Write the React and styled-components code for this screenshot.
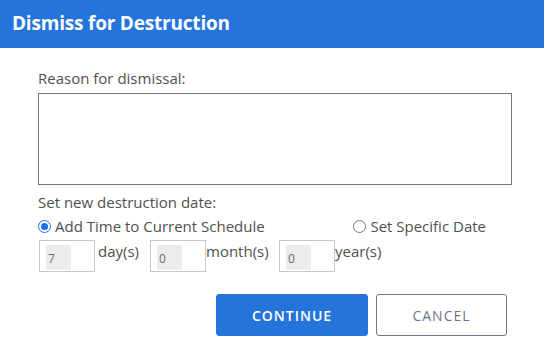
import React from "react";
import styled, { createGlobalStyle } from "styled-components";

const Global = createGlobalStyle`
  html, body { margin: 0; padding: 0; background: #fff; }
  body { font-family: "Open Sans", "Noto Sans", sans-serif; color: #555; }
  * { box-sizing: border-box; }
`;

const Dialog = styled.div`
  width: 544px;
  height: 347px;
  background: #fff;
  display: flex;
  flex-direction: column;
`;

const Header = styled.div`
  height: 48px;
  background: #2574db;
  color: #fff;
  font-size: 19px;
  font-weight: 700;
  display: flex;
  align-items: center;
  padding: 0 0 2px 12px;
  letter-spacing: -0.2px;
`;

const Body = styled.div`
  padding: 20px 32px 0 38px;
  display: flex;
  flex-direction: column;
`;

const Label = styled.div`
  font-size: 15px;
  line-height: 20px;
  color: #505050;
`;

const TextArea = styled.textarea`
  margin-top: 5px;
  width: 474px;
  height: 92px;
  border: 1px solid #6d7786;
  border-radius: 0;
  resize: none;
  outline: none;
  font-family: inherit;
`;

const DateLabel = styled(Label)`
  margin-top: 7px;
`;

const RadioRow = styled.div`
  display: flex;
  justify-content: space-between;
  margin-top: 4px;
  width: 448px;
`;

const RadioOption = styled.label`
  display: flex;
  align-items: center;
  gap: 4px;
  font-size: 15px;
  line-height: 20px;
  color: #505050;
`;

const Radio = styled.span`
  width: 13px;
  height: 13px;
  border-radius: 50%;
  border: 1px solid ${p => (p.$checked ? "#1a73e8" : "#767676")};
  display: flex;
  align-items: center;
  justify-content: center;
  &::after {
    content: "";
    display: ${p => (p.$checked ? "block" : "none")};
    width: 7px;
    height: 7px;
    border-radius: 50%;
    background: #1a73e8;
  }
`;

const UnitsRow = styled.div`
  display: flex;
  align-items: flex-start;
  margin-top: 4px;
  margin-left: 1px;
`;

const UnitBox = styled.div`
  width: 56px;
  height: 32px;
  border: 1px solid #c8c8c8;
  padding: 4px 0 0 6px;
`;

const UnitInput = styled.div`
  width: 25px;
  height: 25px;
  background: #ececec;
  font-size: 12px;
  color: #6a6a6a;
  display: flex;
  align-items: center;
  padding: 2px 0 0 2px;
`;

const UnitText = styled.span`
  font-size: 15px;
  line-height: 20px;
  color: #505050;
  margin-top: 1px;
  width: ${p => (p.$w ? `${p.$w}px` : "auto")};
  padding-left: ${p => p.$lead || 0}px;
`;

const Buttons = styled.div`
  display: flex;
  gap: 8px;
  margin-top: 22px;
  margin-left: 178px;
`;

const Button = styled.button`
  height: 42px;
  width: ${p => p.$w}px;
  border-radius: 3px;
  font-family: "Open Sans", "Noto Sans", sans-serif;
  font-size: 14px;
  letter-spacing: 1px;
  font-weight: ${p => (p.$primary ? 600 : 400)};
  background: ${p => (p.$primary ? "#2574db" : "#fff")};
  color: ${p => (p.$primary ? "#fff" : "#6d7786")};
  border: 1px solid ${p => (p.$primary ? "#2574db" : "#6d7786")};
  cursor: pointer;
`;

export default function App() {
  return (
    <>
      <Global />
      <Dialog>
        <Header>Dismiss for Destruction</Header>
        <Body>
          <Label>Reason for dismissal:</Label>
          <TextArea />
          <DateLabel>Set new destruction date:</DateLabel>
          <RadioRow>
            <RadioOption>
              <Radio $checked />
              Add Time to Current Schedule
            </RadioOption>
            <RadioOption>
              <Radio />
              Set Specific Date
            </RadioOption>
          </RadioRow>
          <UnitsRow>
            <UnitBox><UnitInput>7</UnitInput></UnitBox>
            <UnitText $w={55} $lead={3}>day(s)</UnitText>
            <UnitBox><UnitInput>0</UnitInput></UnitBox>
            <UnitText $w={73}>month(s)</UnitText>
            <UnitBox><UnitInput>0</UnitInput></UnitBox>
            <UnitText>year(s)</UnitText>
          </UnitsRow>
          <Buttons>
            <Button $primary $w={152}>CONTINUE</Button>
            <Button $w={131}>CANCEL</Button>
          </Buttons>
        </Body>
      </Dialog>
    </>
  );
}
